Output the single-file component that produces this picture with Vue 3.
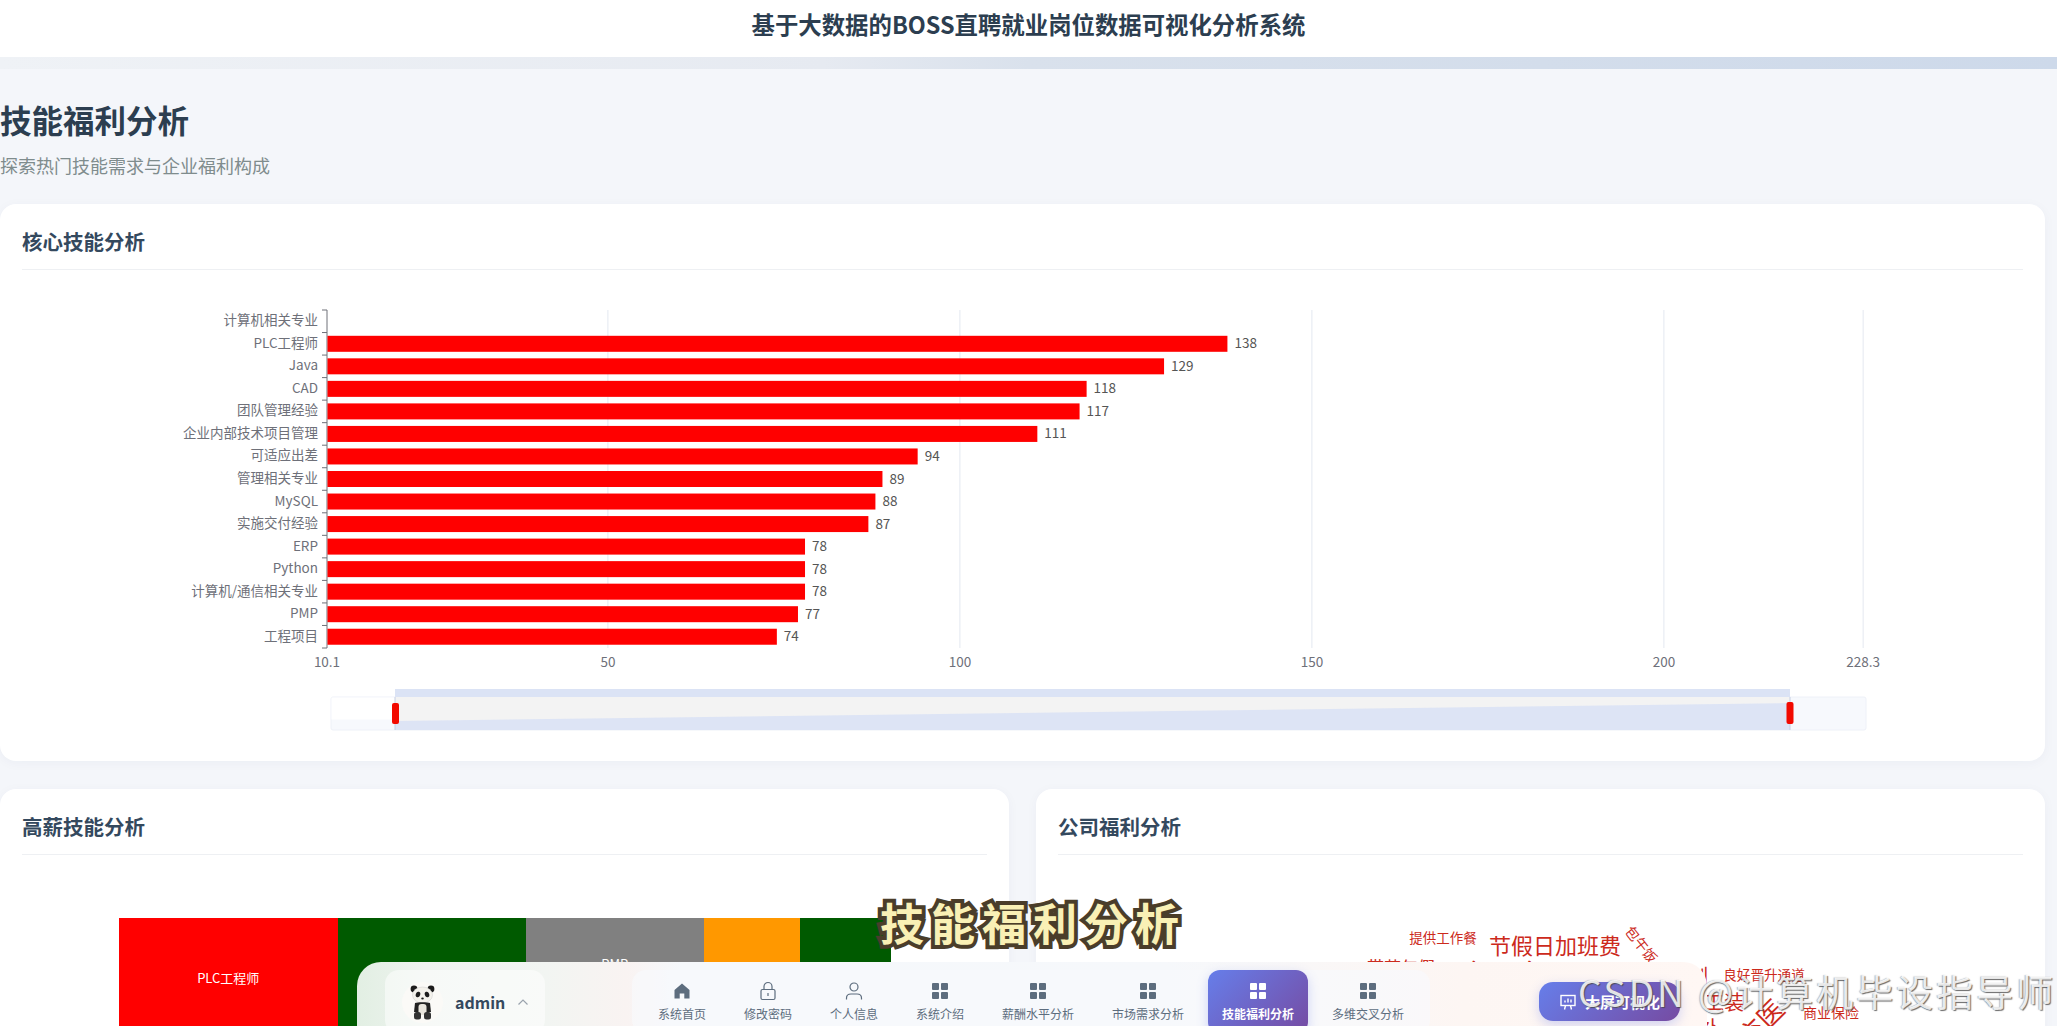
<script setup>
const bars = [
  { name: '计算机相关专业', value: null },
  { name: 'PLC工程师', value: 138 },
  { name: 'Java', value: 129 },
  { name: 'CAD', value: 118 },
  { name: '团队管理经验', value: 117 },
  { name: '企业内部技术项目管理', value: 111 },
  { name: '可适应出差', value: 94 },
  { name: '管理相关专业', value: 89 },
  { name: 'MySQL', value: 88 },
  { name: '实施交付经验', value: 87 },
  { name: 'ERP', value: 78 },
  { name: 'Python', value: 78 },
  { name: '计算机/通信相关专业', value: 78 },
  { name: 'PMP', value: 77 },
  { name: '工程项目', value: 74 },
]
const band = 338 / bars.length
const xOf = (v) => 327 + (v - 10.1) * 7.04
const ticks = [10.1, 50, 100, 150, 200, 228.3]

const treemap = [
  { color: '#ff0000', width: 218.5, label: 'PLC工程师', top: 50 },
  { color: '#005a00', width: 188.5 },
  { color: '#808080', width: 177.5, label: 'PMP', top: 36 },
  { color: '#ff9800', width: 96.5 },
  { color: '#005a00', width: 91 },
]

// x, y are word centres inside the card, page y minus the cloud's top
const words = [
  { t: '提供工作餐', x: 407, y: 938, s: 13.5 },
  { t: '节假日加班费', x: 519, y: 944, s: 22 },
  { t: '包午饭', x: 606, y: 944, s: 14, r: 52 },
  { t: '带薪年假', x: 365, y: 966, s: 17 },
  { t: '五险一金', x: 448, y: 973, s: 30 },
  { t: '弹性工作制', x: 622, y: 976, s: 20 },
  { t: '良好晋升通道', x: 728, y: 975, s: 13.6 },
  { t: '工装', x: 688, y: 1002, s: 20 },
  { t: '商业保险', x: 795, y: 1012, s: 14 },
  { t: '补充医', x: 715, y: 1031, s: 26, r: -45 },
  { t: '交通补', x: 654, y: 1028, s: 20 },
]

const navItems = [
  { label: '系统首页', icon: 'home' },
  { label: '修改密码', icon: 'lock' },
  { label: '个人信息', icon: 'user' },
  { label: '系统介绍', icon: 'grid' },
  { label: '薪酬水平分析', icon: 'grid' },
  { label: '市场需求分析', icon: 'grid' },
  { label: '技能福利分析', icon: 'grid', active: true },
  { label: '多维交叉分析', icon: 'grid' },
]
</script>

<template>
  <div class="page">
    <header class="topbar">基于大数据的BOSS直聘就业岗位数据可视化分析系统</header>
    <div class="strip"></div>

    <main class="content">
      <h1 class="pageTitle">技能福利分析</h1>
      <p class="pageSub">探索热门技能需求与企业福利构成</p>

      <section class="card skillCard">
        <h2 class="cardTitle">核心技能分析</h2>
        <svg class="barChart" width="2045" height="490" viewBox="0 270 2045 490">
          <line v-for="t in ticks.slice(1)" :key="t" :x1="xOf(t)" :x2="xOf(t)" y1="310" y2="648" stroke="#e4e8f0" />
          <line x1="327" x2="327" y1="310" y2="648" stroke="#6e7079" />
          <line v-for="i in bars.length + 1" :key="i" x1="322" x2="327" :y1="310 + (i - 1) * band" :y2="310 + (i - 1) * band" stroke="#6e7079" />
          <g v-for="(b, i) in bars" :key="b.name">
            <text class="axisText" x="318" :y="310 + (i + 0.5) * band + 4" text-anchor="end">{{ b.name }}</text>
            <template v-if="b.value">
              <rect x="327.5" :y="310 + (i + 0.5) * band - 8" :width="xOf(b.value) - 327.5" height="16" fill="#ff0000" />
              <text class="valueText" :x="xOf(b.value) + 7" :y="310 + (i + 0.5) * band + 4.500">{{ b.value }}</text>
            </template>
          </g>
          <text v-for="t in ticks" :key="'x' + t" class="axisText" :x="xOf(t)" y="667" text-anchor="middle">{{ t }}</text>

          <rect x="331" y="697" width="1535" height="33" rx="2" fill="#f7f9fd" stroke="#eef1f8" />
          <rect x="331.5" y="697.5" width="64" height="22" fill="#ffffff" />
          <rect x="395" y="689" width="1395" height="8" fill="#dbe3f5" />
          <rect x="395" y="697" width="1395" height="33" fill="#f3f3f3" />
          <polygon points="395,721 1790,703 1790,730 395,730" fill="#dde4f5" />
          <line x1="395" x2="395" y1="697" y2="730" stroke="#c5cee3" />
          <line x1="1790" x2="1790" y1="697" y2="730" stroke="#c5cee3" />
          <rect x="392" y="703" width="7" height="21" rx="2" fill="#f20a00" />
          <rect x="1786.5" y="702" width="7" height="22" rx="2" fill="#f20a00" />
        </svg>
      </section>

      <div class="row">
        <section class="card halfCard">
          <h2 class="cardTitle">高薪技能分析</h2>
          <div class="treemap">
            <div v-for="(cell, i) in treemap" :key="i" class="cell" :style="{ width: cell.width + 'px', background: cell.color }">
              <span v-if="cell.label" class="cellLabel" :style="{ top: cell.top + 'px' }">{{ cell.label }}</span>
            </div>
          </div>
        </section>

        <section class="card halfCard wideCard">
          <h2 class="cardTitle">公司福利分析</h2>
          <div class="cloud">
            <span
              v-for="w in words"
              :key="w.t"
              class="word"
              :style="{ left: w.x + 'px', top: w.y - 854 + 'px', fontSize: w.s + 'px', transform: `translate(-50%, -50%) rotate(${w.r || 0}deg)` }"
            >{{ w.t }}</span>
          </div>
        </section>
      </div>
    </main>

    <div class="caption">技能福利分析</div>

    <nav class="dock">
      <div class="userBox">
        <svg class="avatar" width="41" height="41" viewBox="0 0 41 41">
          <circle cx="20.5" cy="20.5" r="20.5" fill="#fbfaf7" />
          <circle cx="12" cy="7" r="3.4" fill="#1c1c1c" />
          <circle cx="29" cy="7" r="3.4" fill="#1c1c1c" />
          <ellipse cx="20.5" cy="13" rx="10" ry="8" fill="#f4f2ec" stroke="#ccc" stroke-width="0.5" />
          <ellipse cx="16" cy="12.5" rx="2.2" ry="2.8" fill="#1c1c1c" transform="rotate(20 16 12.5)" />
          <ellipse cx="25" cy="12.5" rx="2.2" ry="2.8" fill="#1c1c1c" transform="rotate(-20 25 12.5)" />
          <ellipse cx="20.5" cy="16.5" rx="1.3" ry="1" fill="#1c1c1c" />
          <path d="M13 21c2-1 13-1 15 0l1 9H12z" fill="#222" />
          <rect x="16.500" y="22" width="8" height="11" rx="3" fill="#e9e6dd" />
          <rect x="12" y="30" width="7" height="7.500" rx="2.500" fill="#333" />
          <rect x="22" y="30" width="7" height="7.500" rx="2.500" fill="#333" />
        </svg>
        <span class="userName">admin</span>
        <svg width="12" height="8" viewBox="0 0 12 8" fill="none" stroke="#9aa3ad" stroke-width="1.2"><path d="M1.5 6.5 6 2l4.5 4.5" /></svg>
      </div>

      <div class="navBox">
        <div v-for="item in navItems" :key="item.label" class="navItem" :data-active="item.active ? '1' : '0'">
          <svg class="navIcon" width="20" height="20" viewBox="0 0 20 20">
            <path v-if="item.icon === 'home'" d="M10 2.5 2.5 9v8.5h5.2v-5h4.6v5h5.2V9z" fill="currentColor" />
            <g v-else-if="item.icon === 'lock'" fill="none" stroke="currentColor" stroke-width="1.2">
              <rect x="3" y="8.5" width="14" height="10" rx="1.5" />
              <path d="M6 8.5V5.5a4 4 0 0 1 8 0v3" />
              <path d="M10 12v3" />
            </g>
            <g v-else-if="item.icon === 'user'" fill="none" stroke="currentColor" stroke-width="1.2">
              <circle cx="10" cy="6" r="4" />
              <path d="M2.5 18.5v-1.5c0-2.5 2-4 4.5-4h6c2.5 0 4.5 1.500 4.500 4v1.500" />
            </g>
            <g v-else fill="currentColor">
              <rect x="2" y="2" width="7" height="7" rx="1" />
              <rect x="11" y="2" width="7" height="7" rx="1" />
              <rect x="2" y="11" width="7" height="7" rx="1" />
              <rect x="11" y="11" width="7" height="7" rx="1" />
            </g>
          </svg>
          <span class="navLabel">{{ item.label }}</span>
        </div>
      </div>

      <button class="bigBtn" type="button">
        <svg width="18" height="18" viewBox="0 0 18 18" fill="none" stroke="#fff" stroke-width="1.400">
          <rect x="2" y="2.5" width="14" height="10" />
          <path d="M6 9.500V7.500M9 9.500V5.500M12 9.500V6.500M6.500 12.500 5.500 16.500M11.500 12.500l1 4" />
        </svg>
        大屏可视化
      </button>
    </nav>

    <div class="watermark">CSDN @计算机毕设指导师</div>
  </div>
</template>

<style scoped>
.page {
  position: relative;
  width: 2057px;
  height: 1026px;
  overflow: hidden;
  background: #f4f6fa;
  font-family: "Noto Sans CJK SC", "Noto Sans", sans-serif;
}
.topbar {
  height: 57px;
  background: #fff;
  color: #2c3e50;
  font-size: 23.4px;
  font-weight: 700;
  line-height: 48px;
  text-align: center;
}
.strip {
  height: 12px;
  background: linear-gradient(90deg, #eff2f6 0%, #e6eaf1 40%, #d9e1ec 50%, #cdd9ea 100%);
}
.content {
  padding-top: 28px;
}
.pageTitle {
  margin: 0;
  color: #2c3e50;
  font-size: 31.500px;
  font-weight: 700;
  line-height: 44px;
}
.pageSub {
  margin: 11px 0 0;
  color: #7f8c8d;
  font-size: 18px;
  line-height: 26px;
}
.card {
  background: #fff;
  border-radius: 16px;
  box-shadow: 0 2px 12px rgba(30, 50, 90, 0.04);
}
.skillCard {
  width: 2045px;
  height: 557px;
  margin-top: 26px;
}
.cardTitle {
  margin: 0 22px;
  padding: 22px 0 12px;
  border-bottom: 1px solid #eef0f3;
  color: #34495e;
  font-size: 20.500px;
  font-weight: 700;
  line-height: 31px;
}
.barChart {
  display: block;
}
.axisText {
  fill: #6e7079;
  font-size: 13.5px;
}
.valueText {
  fill: #555;
  font-size: 13.5px;
}
.row {
  display: flex;
  gap: 27px;
  width: 2045px;
  margin-top: 28px;
}
.halfCard {
  position: relative;
  width: 1009px;
  height: 400px;
}
.wideCard {
  overflow: hidden;
}
.treemap {
  display: flex;
  height: 200px;
  margin: 63px 0 0 119px;
}
.cell {
  position: relative;
  flex: none;
}
.cellLabel {
  position: absolute;
  left: 0;
  right: 0;
  color: #fff;
  font-size: 13px;
  line-height: 20px;
  text-align: center;
}
.cloud {
  position: absolute;
  inset: 65px 0 0 0;
}
.word {
  position: absolute;
  color: #cc2a1c;
  line-height: 1;
  white-space: nowrap;
}
.caption {
  position: absolute;
  left: 880px;
  top: 889px;
  color: #f9f0b5;
  font-size: 44px;
  font-weight: 700;
  letter-spacing: 7px;
  line-height: 66px;
  paint-order: stroke fill;
  -webkit-text-stroke: 8px #4a3d2a;
}
.dock {
  position: absolute;
  left: 357px;
  top: 962px;
  display: flex;
  width: 1350px;
  height: 90px;
  padding: 8px 0 0 28px;
  box-sizing: border-box;
  border-radius: 24px;
  /* tints stand in for the blurred chart colours behind the dock */
  background: linear-gradient(90deg, #e2efe3 0%, #eef3ef 5%, #f2f5f2 14%, #f9f3f2 20%, #f5f8fb 24%, #f6f8fb 60%, #fdf6f3 82%, #fff7f4 100%);
}
.userBox {
  display: flex;
  align-items: center;
  align-self: flex-start;
  gap: 12px;
  width: 160px;
  height: 64px;
  padding-left: 17px;
  box-sizing: border-box;
  border-radius: 14px;
  background: rgba(255, 255, 255, 0.5);
}
.avatar {
  flex: none;
}
.userName {
  color: #34495e;
  font-size: 16px;
  font-weight: 700;
}
.navBox {
  display: flex;
  gap: 10px;
  align-self: flex-start;
  height: 64px;
  margin-left: 87px;
  padding: 0 12px;
  border-radius: 14px;
  background: rgba(248, 250, 253, 0.6);
}
.navItem {
  display: flex;
  flex-direction: column;
  align-items: center;
  gap: 5px;
  padding: 11px 14px 0;
  border-radius: 12px;
  color: #5d6d7e;
}
.navItem[data-active='1'] {
  background: linear-gradient(135deg, #667eea, #764ba2);
  color: #fff;
  font-weight: 700;
  box-shadow: 0 4px 12px rgba(102, 126, 234, 0.3);
}
.navIcon {
  flex: none;
}
.navLabel {
  font-size: 12px;
  line-height: 16px;
  white-space: nowrap;
}
.bigBtn {
  position: absolute;
  left: 1182px;
  top: 20px;
  display: flex;
  align-items: center;
  justify-content: center;
  gap: 8px;
  width: 141px;
  height: 39px;
  border: 0;
  border-radius: 14px;
  background: linear-gradient(135deg, #667eea, #764ba2);
  box-shadow: 0 4px 12px rgba(102, 126, 234, 0.3);
  color: #fff;
  font-family: inherit;
  font-size: 15px;
  font-weight: 700;
}
.watermark {
  position: absolute;
  left: 1578px;
  top: 964px;
  color: rgba(255, 255, 255, 0.85);
  font-size: 37px;
  letter-spacing: 3px;
  line-height: 54px;
  text-shadow: 1px 1px 1px rgba(70, 70, 70, 0.8), -1px 0 1px rgba(120, 120, 120, 0.5);
  white-space: nowrap;
}
</style>
